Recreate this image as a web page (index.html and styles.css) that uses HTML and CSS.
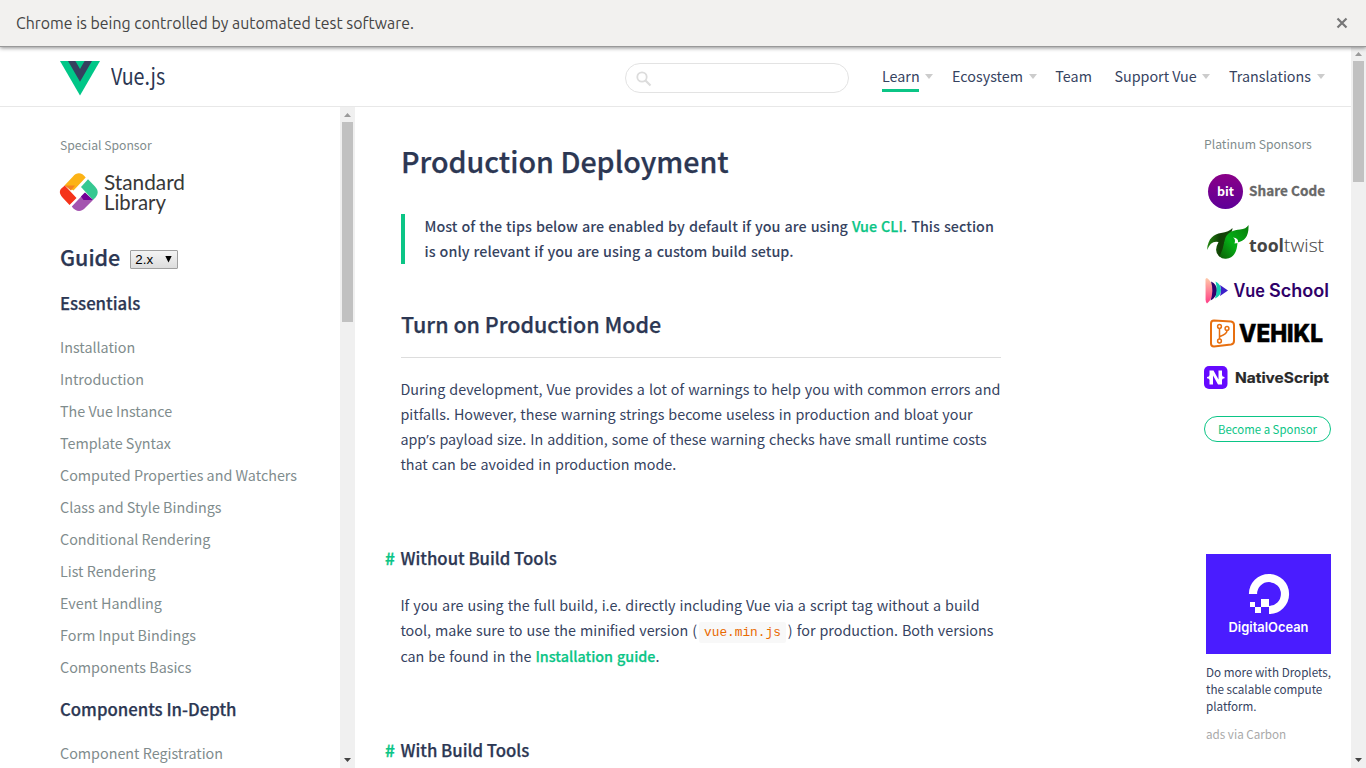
FILE: index.html
```html
<!DOCTYPE html>
<html lang="en">
<head>
<meta charset="utf-8">
<title>Production Deployment — Vue.js</title>
<link rel="stylesheet" href="styles.css">
</head>
<body>
<div class="infobar">
  <span>Chrome is being controlled by automated test software.</span>
  <svg class="close" width="12" height="12" viewBox="0 0 12 12"><path d="M1.5 1.5 10.5 10.5M10.5 1.5 1.5 10.5" stroke="#777" stroke-width="2.2"/></svg>
</div>
<div class="window">
  <div class="page">
    <header class="header">
      <a class="logo">
        <svg width="40" height="35" viewBox="0 0 40 35"><path d="M0 0H40L20 34.6Z" fill="#00c788"/><path d="M8 0H15.4L20 8 24.6 0H32L20 20.7Z" fill="#36405f"/></svg>
        <span>Vue.js</span>
      </a>
      <div class="search">
        <svg width="16" height="16" viewBox="0 0 16 16" fill="none" stroke="#dcdcdc"><circle cx="6" cy="6" r="4.7" stroke-width="1.8"/><path d="M9.5 9.5 14.5 14.5" stroke-width="2.2"/></svg>
      </div>
      <nav class="nav">
        <a class="item drop active"><span>Learn</span></a>
        <a class="item drop"><span>Ecosystem</span></a>
        <a class="item"><span>Team</span></a>
        <a class="item drop"><span>Support Vue</span></a>
        <a class="item drop"><span>Translations</span></a>
      </nav>
    </header>
    <div class="columns">
      <aside class="sidebar">
        <div class="label">Special Sponsor</div>
        <svg class="stdlib" width="130" height="46" viewBox="0 0 130 46">
          <path d="M4.5 12.500 13 3.500C16.500 -1 22 -1 25.700 4.500L13.500 17.500Z" fill="#fcb316"/>
          <path d="M4.800 12.500 16.500 25 9.500 32 2.500 24.500C-1 20.500 -1 17 2.500 14.500Z" fill="#f5331a"/>
          <path d="M4.800 12.500H15L11 17.500Z" fill="#f58220"/>
          <path d="M28 6.300 35 13.500C38.500 17.500 38.500 20.500 35.500 24.500L33 27 21 14Z" fill="#36c891"/>
          <path d="M24.500 20 33 27 25.500 34.500C21.500 39.500 15.500 39 11.800 33.500Z" fill="#a455b0"/>
          <path d="M25 19.500 33 27H23.500L21 23.500Z" fill="#720096"/>
          <g font-family="Lato" font-size="20.500" fill="#383838"><text x="44" y="17" textLength="81" lengthAdjust="spacingAndGlyphs">Standard</text><text x="44" y="37" textLength="62" lengthAdjust="spacingAndGlyphs">Library</text></g>
        </svg>
        <h2>Guide <span class="select">2.x<svg width="7" height="8" viewBox="0 0 7 8"><path d="M.3 1H6.700L3.500 7.500Z"/></svg></span></h2>
        <h3>Essentials</h3>
        <ul>
          <li>Installation</li><li>Introduction</li><li>The Vue Instance</li><li>Template Syntax</li><li>Computed Properties and Watchers</li><li>Class and Style Bindings</li><li>Conditional Rendering</li><li>List Rendering</li><li>Event Handling</li><li>Form Input Bindings</li><li>Components Basics</li>
        </ul>
        <h3 class="second">Components In-Depth</h3>
        <ul><li>Component Registration</li></ul>
      </aside>
      <div class="scroll inner">
        <svg class="up" width="7" height="4" viewBox="0 0 7 4"><path d="M3.500 0 7 4H0Z" fill="#9a9a9a"/></svg>
        <div class="thumb"></div>
        <svg class="down" width="7" height="4" viewBox="0 0 7 4"><path d="M0 0H7L3.500 4Z" fill="#444"/></svg>
      </div>
      <main class="content">
        <h1>Production Deployment</h1>
        <blockquote><div>Most of the tips below are enabled by default if you are using <a>Vue CLI</a>. This section<br>is only relevant if you are using a custom build setup.</div></blockquote>
        <h2>Turn on Production Mode</h2>
        <p>During development, Vue provides a lot of warnings to help you with common errors and<br>pitfalls. However, these warning strings become useless in production and bloat your<br>app<span class="apos">’</span>s payload size. In addition, some of these warning checks have small runtime costs<br>that can be avoided in production mode.</p>
        <h3><i>#</i>Without Build Tools</h3>
        <p class="build">If you are using the full build, i.e. directly including Vue via a script tag without a build<br>tool, make sure to use the minified version (<code>vue.min.js</code>) for production. Both versions<br>can be found in the <a>Installation guide</a>.</p>
        <h3><i>#</i>With Build Tools</h3>
      </main>
      <aside class="sponsors">
        <div class="label">Platinum Sponsors</div>
        <svg class="brands" width="130" height="226" viewBox="1203 168 130 226">
          <defs>
            <linearGradient id="bit" x1="0" y1="0" x2="0" y2="1"><stop offset="0" stop-color="#8a0087"/><stop offset="1" stop-color="#5e0098"/></linearGradient>
            <linearGradient id="leafA"><stop offset="0" stop-color="#238a12"/><stop offset=".5" stop-color="#103f05"/><stop offset="1" stop-color="#16490c"/></linearGradient>
            <linearGradient id="leafB" x1="0" y1="1" x2="1" y2="0"><stop offset="0" stop-color="#0e5d08"/><stop offset=".45" stop-color="#04b016"/><stop offset="1" stop-color="#087b0b"/></linearGradient>
            <linearGradient id="pink" x1="0" y1="0" x2="0" y2="1"><stop offset="0" stop-color="#ffc9a8"/><stop offset="1" stop-color="#ff3d86"/></linearGradient>
          </defs>
          <circle cx="1225.500" cy="191.500" r="17.500" fill="url(#bit)"/>
          <text x="1217" y="196" class="w7" font-size="12.500" fill="#fff" textLength="17">bit</text>
          <text x="1249" y="196.300" class="w7" font-size="13.500" fill="#686868" textLength="76" stroke="#686868" stroke-width=".3">Share Code</text>
          <path d="M1207 250C1208 238 1214 234 1221 233Q1229 232 1232.500 228Q1232.500 232 1229 235C1225 239 1223 246 1224 256L1220 257Q1213 252 1218.500 242Q1211 240 1207 250Z" fill="url(#leafA)"/>
          <path d="M1219.500 256.500Q1223 250 1224.500 241C1226 232 1234 230 1240 229.500Q1246 229 1248.500 225C1249 236 1245 241 1237.500 242.500C1237 250 1235 258 1226 258.700Q1222 259 1219.500 256.500Z" fill="url(#leafB)"/>
          <path d="M1234.500 243.500Q1236 239 1233 237.500Q1239 238 1238 243Z" fill="#fff"/>
          <text x="1249" y="251.500" class="open" font-size="18" font-weight="700" fill="#454545" textLength="35" lengthAdjust="spacingAndGlyphs">tool</text>
          <text x="1284" y="251.500" class="open" font-size="18" font-weight="300" fill="#454545" stroke="#454545" stroke-width=".1" textLength="40" lengthAdjust="spacingAndGlyphs">twist</text>
          <path d="M1205.500 279.500Q1205.500 278 1207 278Q1212.500 282 1213.500 290Q1212 300 1207 303.500Q1205.800 303 1205.600 300Z" fill="url(#pink)"/>
          <path d="M1211 281.500Q1217 284 1217 291Q1217 297 1210.500 300.500Q1214 291 1211 281.500Z" fill="#30006d"/>
          <path d="M1215.500 281.500Q1221 284 1221 290Q1221 296 1215 298.500Q1218 290 1215.500 281.500Z" fill="#14ccb1"/>
          <path d="M1220 285 1228 290.500 1220 296Q1222 290 1220 285Z" fill="#3d20c9"/>
          <g class="inter" fill="#2f0068"><text x="1233.500" y="297" font-size="18" font-weight="600" textLength="31.500" lengthAdjust="spacingAndGlyphs">Vue</text><text x="1269" y="297" font-size="18" font-weight="600" textLength="60" lengthAdjust="spacingAndGlyphs">School</text></g>
          <path d="M1214 320.500 1231 321.500Q1234 322 1234 325V341Q1234 344 1231 344.500L1214 346.500Q1211 346.500 1211 343.500V323.500Q1211 320.500 1214 320.500Z" fill="none" stroke="#e76f10" stroke-width="2"/>
          <g fill="none" stroke="#e76f10" stroke-width="1.500"><circle cx="1219.500" cy="326.500" r="1.900"/><circle cx="1227" cy="328.500" r="1.900"/><circle cx="1219.500" cy="341" r="1.900"/><path d="M1219.500 328.500V339M1227 330.500Q1227 334 1220 336.500"/></g>
          <text x="1239" y="342" class="inter" font-size="24.500" font-weight="800" textLength="84" lengthAdjust="spacingAndGlyphs" stroke="#000" stroke-width=".5">VEHIKL</text>
          <rect x="1204" y="366" width="23.500" height="23" rx="5" fill="#6509ff"/>
          <path d="M1209.500 370.500H1213.500L1218.500 379.500V370.500H1222V375Q1222 377 1224.500 377V378.200Q1222 378.200 1222 380V384.500H1218L1213 375.500V384.500H1209.500V380Q1209.500 378.200 1207 378.200V377Q1209.500 377 1209.500 375Z" fill="#fff"/>
          <text x="1235" y="383" class="inter" font-size="14.500" font-weight="700" fill="#292929" textLength="94" lengthAdjust="spacingAndGlyphs" stroke="#292929" stroke-width=".2">NativeScript</text>
        </svg>
        <a class="become">Become a Sponsor</a>
        <div class="ad">
          <svg width="125" height="100" viewBox="0 0 125 100">
            <rect width="125" height="100" fill="#4a1cff"/>
            <path d="M47 40A16 16 0 1 1 63 56" fill="none" stroke="#fff" stroke-width="8.200"/>
            <path d="M55 45H63V53H55ZM49 53H55V59H49ZM44 48H49V53H44Z" fill="#fff"/>
            <text x="22.500" y="78" class="inter" font-size="13.500" font-weight="600" fill="#fff" textLength="80" lengthAdjust="spacingAndGlyphs">DigitalOcean</text>
          </svg>
          <div class="adtext">Do more with Droplets,<br>the scalable compute<br>platform.</div>
          <div class="via">ads via Carbon</div>
        </div>
      </aside>
    </div>
  </div>
  <div class="scroll outer">
    <svg class="up" width="7" height="4" viewBox="0 0 7 4"><path d="M3.500 0 7 4H0Z" fill="#9a9a9a"/></svg>
    <div class="thumb"></div>
    <svg class="down" width="7" height="4" viewBox="0 0 7 4"><path d="M0 0H7L3.500 4Z" fill="#444"/></svg>
  </div>
</div>
</body>
</html>
```
FILE: styles.css
```css
* { box-sizing: border-box; }
body {
  margin: 0;
  height: 768px;
  overflow: hidden;
  display: flex;
  flex-direction: column;
  background: #fff;
  color: #36435f;
  font: 14.33px/25px "Noto Sans CJK SC", sans-serif;
}
h1, h2, h3, p, ul, blockquote { margin: 0; padding: 0; }
h1, h2, h3 { color: #2c3753; font-weight: 500; -webkit-text-stroke: .25px currentColor; }
svg { display: block; flex: none; overflow: visible; }

.infobar {
  flex: none;
  height: 47px;
  padding: 0 18px 0 16px;
  display: flex;
  align-items: center;
  justify-content: space-between;
  background: #f2f1ef;
  border-bottom: 1px solid #999;
  box-shadow: 0 1px 4px rgba(0, 0, 0, .45);
  color: #444;
  font: 15.88px/46px Ubuntu, "Noto Sans", sans-serif;
  z-index: 1;
}

.window { flex: 1; min-height: 0; display: flex; }
.page { width: 1351px; display: flex; flex-direction: column; }

.header {
  flex: none;
  height: 60px;
  padding: 0 26px 0 60px;
  display: flex;
  align-items: center;
  border-bottom: 1px solid #e8e8e8;
}
.logo { width: 565px; display: flex; align-items: center; padding-top: 4px; }
.logo span {
  margin: -5px 0 0 10.5px;
  font-size: 22.6px;
  line-height: 30px;
  color: #2c3753;
  transform: scaleX(.87);
  transform-origin: left;
}
.search {
  width: 224px;
  height: 30px;
  margin-top: 3px;
  padding: 7px 0 0 10px;
  border: 1px solid #e3e3e3;
  border-radius: 15px;
}
.nav { flex: 1; display: flex; margin-left: 33px; white-space: nowrap; }
.item { display: flex; align-items: center; margin-right: 22.5px; }
.item span { line-height: 24px; height: 29px; padding-top: 1px; margin-top: 2px; }
.active span { width: 37px; margin-right: .7px; border-bottom: 3px solid #0bc586; }
.drop { margin-right: 18.7px; }
.drop::after {
  content: "";
  margin: 0 0 0 5.7px;
  border: 4px solid transparent;
  border-top: 5px solid #ccc;
  border-bottom: 0;
}
.item:last-child { margin-right: 0; }

.columns { flex: 1; min-height: 0; display: flex; }
.sidebar { width: 340px; padding: 26px 0 0 60px; overflow: hidden; }
.label { color: #7f8c8d; font-size: 12.2px; line-height: 25px; }
.stdlib { margin-top: 15px; }
.sidebar h2 { display: flex; align-items: center; margin-top: 20px; font-size: 21.49px; line-height: 36px; height: 36px; }
.select {
  width: 48px;
  height: 19px;
  margin: 5px 0 0 10px;
  padding: 0 5px 1px 4px;
  display: flex;
  align-items: center;
  justify-content: space-between;
  border: 1px solid #a0a0a0;
  border-radius: 1px;
  background: linear-gradient(#f4f4f4, #ddd);
  color: #000;
  font: 13.33px/17px "Liberation Sans", sans-serif;
  -webkit-text-stroke: 0;
}
.sidebar h3 { margin-top: 15px; font-size: 16.76px; line-height: 26px; }
.sidebar ul { list-style: none; margin-top: 15px; color: #7f8c8d; line-height: 32px; }
.sidebar h3.second { margin-top: 13px; }

.scroll { width: 15px; display: flex; flex-direction: column; align-items: center; background: #f0f0f0; }
.scroll .thumb { width: 11px; background: #c1c1c1; }
.inner .up { margin: 6px 0 5px; }
.inner .thumb { height: 200px; }
.outer .up { margin: 5px 0; }
.outer .thumb { height: 121px; }
.scroll .down { margin: auto 0 6px; }

.content { width: 849px; padding: 34px 0 0 46px; overflow: hidden; word-spacing: .8px; }
.content > * { width: 600px; }
.content h1 { font-size: 28.65px; line-height: 40px; word-spacing: 0; }
.content blockquote { display: flow-root; height: 50px; margin-top: 33px; padding-left: 20px; border-left: 4px solid #0bc586; font-weight: 500; letter-spacing: .02px; }
.content blockquote div { margin: -1px 0 0 -.5px; }
.content a { color: #0bc586; font-weight: 500; -webkit-text-stroke: .25px currentColor; }
.content h2 { margin-top: 42px; padding-bottom: 16px; border-bottom: 1px solid #ddd; font-size: 21.49px; line-height: 35px; word-spacing: 0; }
.content p { margin: 18px 0 0 -.6px; white-space: nowrap; }
.apos { font-family: "Open Sans", sans-serif; line-height: 1; }
.content h3 { display: flex; margin: 69px 0 0 -.5px; font-size: 16.76px; line-height: 26px; word-spacing: 0; }
.content h3 i { width: 15.500px; margin-left: -15.500px; color: #0bc586; font-style: normal; font-weight: 700; }
.content p.build { margin-top: 21px; line-height: 25px; }
code {
  margin: 0 2px;
  padding: 3px 5px;
  border-radius: 2px;
  background: #f8f8f8;
  color: #e96900;
  font: 12.8px/20px "Liberation Mono", monospace;
}

.sponsors { padding: 25px 0 0; }
.sponsors .label { line-height: 24px; }
.brands { margin: 12px 0 22px -1px; }
.w7 { font-weight: 700; }
.open { font-family: "Open Sans", sans-serif; }
.inter { font-family: Inter, sans-serif; }
.become {
  display: block;
  width: 127px;
  height: 26px;
  border: 1px solid #0bc586;
  border-radius: 13px;
  color: #0bc586;
  font-size: 11.4px;
  line-height: 24px;
  text-align: center;
}
.ad { margin: 112px 0 0 2px; font-size: 11.66px; white-space: nowrap; }
.adtext { margin-top: 9px; line-height: 17px; }
.via { margin-top: 11px; line-height: 17px; color: #a9a9a9; }
```
